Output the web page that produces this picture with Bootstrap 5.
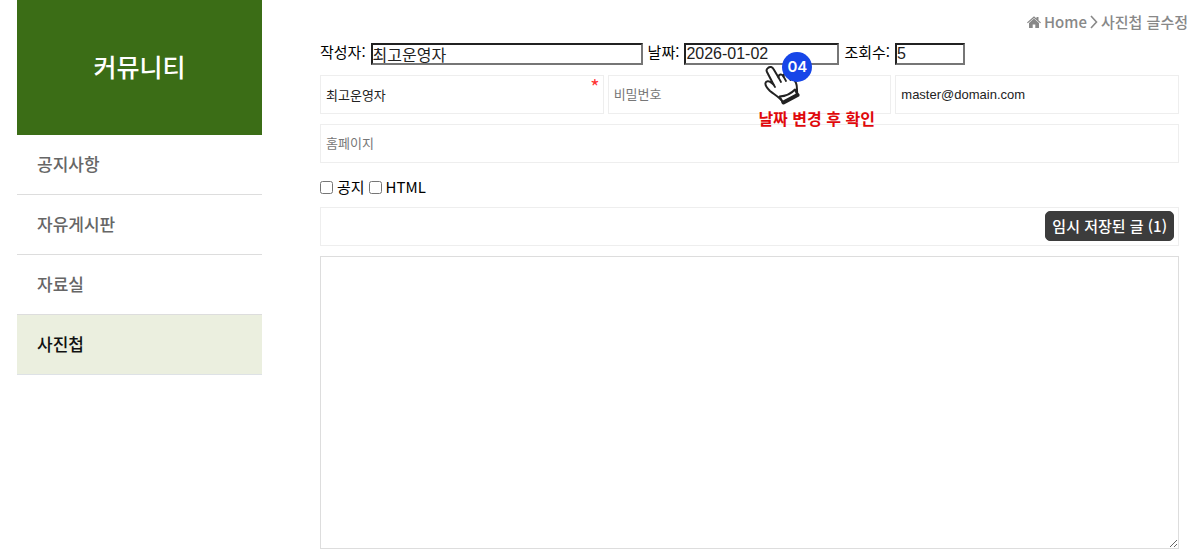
<!DOCTYPE html>
<html lang="ko">
<head>
<meta charset="utf-8">
<meta name="viewport" content="width=device-width, initial-scale=1">
<title>사진첩 글수정</title>
<link href="https://cdn.jsdelivr.net/npm/bootstrap@5.3.0/dist/css/bootstrap.min.css" rel="stylesheet">
<style>
body { font-family: "Noto Sans CJK KR", sans-serif; font-size: 15px; line-height: 22px; color: #000; }
.page { padding-left: 17px; }
.side { flex: 0 0 245px; }
.side-title { background: #3b6d16; padding: 48px 0 51px; font-size: 25px; line-height: 36px; font-weight: 500; }
.side .list-group-item { padding: 17px 20px 18px; border-color: #ddd; border-width: 0 0 1px; font-size: 17px; line-height: 24px; color: #666; font-weight: 500; }
.side .list-group-item.active { background: #ebefdf; color: #111; margin-top: 0; }
.crumbs { font-size: 15px; line-height: 20px; font-weight: 500; color: #888; padding: 12px 12px 9px 0; gap: 3px; }
.crumbs a { color: #888; }
.content-col { padding-left: 58px; }
.form-area { padding-right: 21px; }
.meta-row { gap: 5px; }
.meta-row label { padding-bottom: 3px; }
.meta-input { border: 2px inset #767676; border-radius: 0; padding: 0; height: 22px; font: 16px/18px "Liberation Sans", "Noto Sans CJK KR", sans-serif; color: #222; min-width: 0; }
.w-author { width: 272px; }
.w-date { width: 155px; }
.w-hits { width: 70px; }
.field { border-radius: 0; border-color: #eee; height: 39px; padding: 0 5px; font: 13px/20px "Liberation Sans", "Noto Sans CJK KR", sans-serif; color: #222; }
.field::placeholder { color: #777; opacity: 1; font-family: "Noto Sans CJK KR", sans-serif; }
.fields { --bs-gutter-x: 4px; margin-top: 9px; margin-bottom: 10px; }
.required-mark { top: 0; right: 6px; color: #f33; font-size: 20px; line-height: 24px; }
.checks { gap: 4px; margin: 13px 0 9px; }
.checks input { width: 13px; height: 13px; margin: 0; }
.draft-btn { top: 4px; right: 5px; background: #3c3c3c; color: #fff; font-size: 15px; line-height: 20px; font-weight: 500; padding: 4px 6px; border: 1px solid #3c3c3c; border-radius: 5px; }
.draft-btn:hover { background: #222; color: #fff; }
.editor { border-radius: 0; border-color: #ddd; height: 293px; margin-top: 10px; resize: both; }
.tip { left: 74px; top: 9px; width: 130px; height: 80px; pointer-events: none; z-index: 3; }
.tip-no { left: 24px; top: 0; width: 30px; height: 30px; background: #1746e8; color: #fff; font: 600 15px/30px Inter, sans-serif; }
.tip-hand { left: 6px; top: 13px; }
.tip-text { left: 0; top: 54px; color: #e0080b; font-size: 16px; line-height: 24px; font-weight: 700; }
</style>
</head>
<body>
<div class="page d-flex">
  <aside class="side">
    <h2 class="side-title text-white text-center m-0">커뮤니티</h2>
    <nav class="list-group list-group-flush">
      <a class="list-group-item" href="#">공지사항</a>
      <a class="list-group-item" href="#">자유게시판</a>
      <a class="list-group-item" href="#">자료실</a>
      <a class="list-group-item active border-top-0 border-bottom" href="#" aria-current="page">사진첩</a>
    </nav>
  </aside>
  <main class="content-col flex-grow-1">
    <nav class="crumbs d-flex justify-content-end align-items-center">
      <svg width="14" height="12" viewBox="0 0 14 12" fill="#888" aria-hidden="true"><path d="M7 .2 9.500 2.400V1h2v3.200L14 6.400l-.8.9L7 1.900.8 7.300 0 6.400z"/><path d="M7 2.600 12 6.900V12H8.300V8.400H5.700V12H2V6.900z"/></svg>
      <a class="text-decoration-none" href="#">Home</a>
      <svg width="8" height="14" viewBox="0 0 8 14" fill="none" stroke="#888" stroke-width="1.600" aria-hidden="true"><path d="M1 1 6.500 7 1 13"/></svg>
      <span>사진첩 글수정</span>
    </nav>
    <form class="form-area">
      <div class="meta-row d-flex align-items-center">
        <label for="author">작성자:</label>
        <input class="meta-input w-author" id="author" type="text" value="최고운영자">
        <label for="date">날짜:</label>
        <div class="position-relative d-flex">
          <input class="meta-input w-date" id="date" type="text" value="2026-01-02">
          <div class="tip position-absolute">
            <svg class="tip-hand position-absolute" width="36" height="40" viewBox="0 0 36 40" aria-hidden="true">
              <path d="M4 3C6 1 8.500 2 9.500 4L14.500 12.500C14.500 9 18 8.500 19.500 11.500C19.500 8 23 8 24.500 11C25.500 8.500 28 9 29 12L32 18C33.500 21 32.500 25 33.500 30L19 37.500C17 33 11 30 6 26C4 24 1 20 1.500 18C2 16 5 15.500 7 17.500L9.500 19.500L3 7C2 5 2.500 4 4 3Z" fill="#fff" stroke="#222" stroke-width="2" stroke-linejoin="round"/>
              <path d="M14.500 12.500 17 17M19.500 11.500 22 16M24.500 11 26.500 15M9.500 19.500 11 22" fill="none" stroke="#222" stroke-width="1.800" stroke-linecap="round"/>
              <path d="M15.500 31.500Q25 31 31 24.500L33.500 30 19 37.500Z" fill="#fff" stroke="#222" stroke-width="2" stroke-linejoin="round"/>
              <path d="M19.500 37.500 33.500 30" stroke="#222" stroke-width="4" stroke-linecap="round"/>
            </svg>
            <span class="tip-no position-absolute rounded-circle text-center">04</span>
            <strong class="tip-text position-absolute text-nowrap">날짜 변경 후 확인</strong>
          </div>
        </div>
        <label for="hits">조회수:</label>
        <input class="meta-input w-hits" id="hits" type="text" value="5">
      </div>
      <div class="fields row row-cols-3">
        <div class="col position-relative">
          <input class="form-control field" type="text" aria-label="이름" value="최고운영자">
          <span class="required-mark position-absolute">*</span>
        </div>
        <div class="col"><input class="form-control field" type="password" aria-label="비밀번호" placeholder="비밀번호"></div>
        <div class="col"><input class="form-control field" type="email" aria-label="이메일" value="master@domain.com"></div>
      </div>
      <input class="form-control field" type="text" aria-label="홈페이지" placeholder="홈페이지">
      <div class="checks d-flex align-items-center">
        <input type="checkbox" id="notice"><label for="notice">공지</label>
        <input type="checkbox" id="html"><label for="html">HTML</label>
      </div>
      <div class="position-relative">
        <input class="form-control field" type="text" aria-label="제목">
        <button class="btn draft-btn position-absolute" type="button">임시 저장된 글 (1)</button>
      </div>
      <textarea class="form-control editor" aria-label="내용"></textarea>
    </form>
  </main>
</div>
<script src="https://cdn.jsdelivr.net/npm/bootstrap@5.3.0/dist/js/bootstrap.bundle.min.js"></script>
</body>
</html>
